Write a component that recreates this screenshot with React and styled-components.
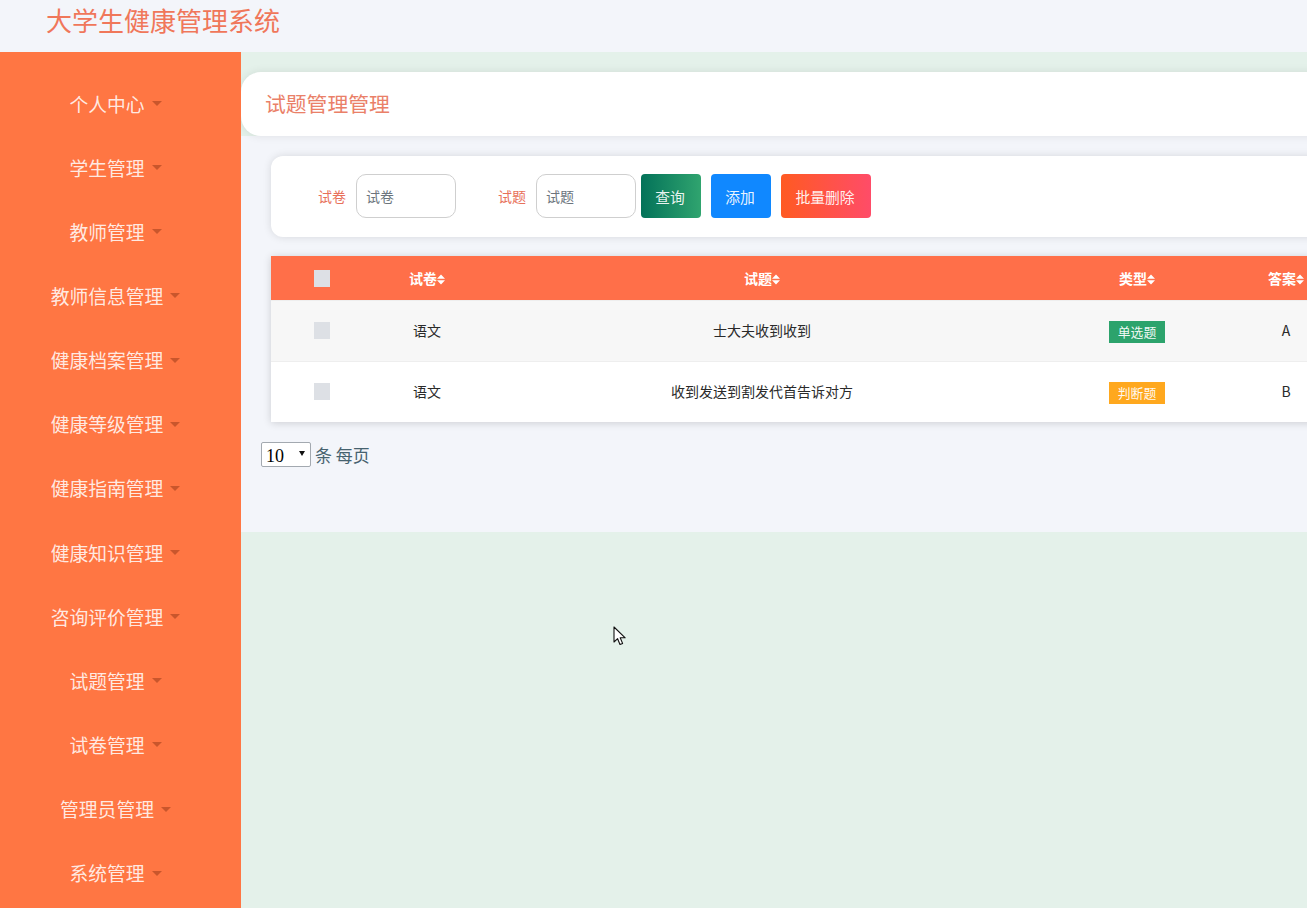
import React from "react";
import styled, { createGlobalStyle } from "styled-components";

const Global = createGlobalStyle`
  html, body { margin: 0; padding: 0; height: 100%; overflow: hidden; }
  body { font-family: "Noto Sans CJK SC", "Liberation Sans", sans-serif; background: #e4f1ea; }
  * { box-sizing: border-box; }
`;

const Page = styled.div`
  position: relative;
  width: 1307px;
  height: 908px;
  overflow: hidden;
  display: flex;
  flex-direction: column;
  background: #e4f1ea;
`;
const Header = styled.header`
  height: 52px;
  flex: none;
  background: #f3f5fa;
  padding-left: 46px;
`;
const Title = styled.h1`
  margin: 0;
  font-size: 26px;
  font-weight: 400;
  line-height: 40px;
  color: #f0775a;
`;
const Body = styled.div`
  flex: 1;
  min-height: 0;
  display: flex;
`;
const Sidebar = styled.nav`
  width: 241px;
  flex: none;
  background: #ff7643;
  padding: 20px 10px 0 0;
  overflow: hidden;
`;
const MenuItem = styled.div`
  height: 64.15px;
  display: flex;
  align-items: center;
  justify-content: center;
  gap: 7px;
  font-size: 18.8px;
  color: rgba(255, 255, 255, 0.86);
`;
const MenuLabel = styled.span`
  margin-bottom: 2px;
`;
const Caret = styled.span`
  width: 0;
  height: 0;
  margin-top: -1px;
  border-left: 5px solid transparent;
  border-right: 5px solid transparent;
  border-top: 5px solid #c9562c;
`;
const Main = styled.main`
  flex: 1;
  min-width: 0;
  padding-top: 20px;
  overflow: hidden;
`;
const Crumb = styled.div`
  position: relative;
  z-index: 1;
  width: 1200px;
  height: 64px;
  background: #fff;
  border-radius: 20px;
  padding: 0 0 2px 24px;
  display: flex;
  align-items: center;
  font-size: 20.8px;
  color: #ea8068;
  box-shadow: 0 0 10px rgba(0, 0, 0, 0.09);
`;
const Panel = styled.section`
  height: 396px;
  background: #f3f5fa;
  padding: 20px 0 0 20px;
`;
const SearchCard = styled.div`
  position: relative;
  z-index: 1;
  margin-left: 10px;
  width: 1200px;
  height: 81px;
  background: #fff;
  border-radius: 12px;
  padding: 18px 0 0 47px;
  display: flex;
  align-items: flex-start;
  box-shadow: 0 0 8px rgba(0, 0, 0, 0.12);
`;
const Label = styled.label`
  font-size: 14px;
  line-height: 44px;
  color: #e8705a;
  margin-right: 10px;
`;
const Input = styled.input`
  width: 100px;
  height: 44px;
  margin-right: ${(p) => p.$gap}px;
  padding: 0 9px;
  border: 1px solid #cfcfcf;
  border-radius: 10px;
  background: #fff;
  font: 14px "Noto Sans CJK SC", sans-serif;
  outline: none;
  &::placeholder { color: #6c757d; opacity: 1; }
`;
const Button = styled.button`
  width: ${(p) => p.$w}px;
  height: 44px;
  margin-right: 10px;
  border: 0;
  padding: 0 2px 0 0;
  border-radius: 4px;
  background: ${(p) => p.$bg};
  color: rgba(255, 255, 255, 0.92);
  font: 14.8px "Noto Sans CJK SC", sans-serif;
`;
const TableCard = styled.div`
  margin: 19px 0 0 10px;
  width: 1200px;
  box-shadow: 0 1px 8px rgba(0, 0, 0, 0.16);
`;
const Table = styled.table`
  width: 100%;
  table-layout: fixed;
  border-collapse: collapse;
  background: #fff;
  text-align: center;
`;
const HeadRow = styled.tr`
  height: 44px;
  background: #ff6f49;
  color: #fff;
  font-size: 14px;
`;
const Th = styled.th`
  padding: 0;
  font-weight: 700;
`;
const Sort = styled.svg`
  width: 8px;
  height: 11px;
  vertical-align: -1px;
`;
const Row = styled.tr`
  height: 61px;
  font-size: 14px;
  color: #2a2a2a;
  background: ${(p) => (p.$striped ? "#f7f7f7" : "#fff")};
  border-top: 1px solid #eee;
`;
const Td = styled.td`
  padding: 0 0 2px;
`;
const CheckCell = styled.td`
  padding: 0;
`;
const BadgeCell = styled.td`
  padding: 3px 0 0;
`;
const Check = styled.span`
  display: inline-block;
  width: 16px;
  height: 17px;
  margin-bottom: ${(p) => p.$up}px;
  vertical-align: middle;
  background: #dde0e5;
`;
const Badge = styled.span`
  display: inline-block;
  width: 56px;
  height: 22px;
  line-height: 21px;
  font-size: 12.8px;
  color: rgba(255, 255, 255, 0.95);
  background: ${(p) => p.$bg};
`;
const Pager = styled.div`
  margin-top: 20px;
  display: flex;
  align-items: center;
  gap: 4px;
  font-size: 17px;
  color: #46626f;
`;
const SelectWrap = styled.div`
  position: relative;
  display: flex;
`;
const PageSelect = styled.select`
  appearance: none;
  width: 50px;
  height: 25px;
  padding: 2px 0 0 4px;
  border: 1px solid #a3a9b0;
  border-radius: 2px;
  background: #fff;
  color: #000;
  font: 18px "Liberation Serif", serif;
`;
const SelectArrow = styled.span`
  position: absolute;
  right: 6px;
  top: 9px;
  width: 0;
  height: 0;
  border-left: 3px solid transparent;
  border-right: 3px solid transparent;
  border-top: 5px solid #111;
`;
const Cursor = styled.svg`
  position: absolute;
  left: 613px;
  top: 626px;
  width: 13px;
  height: 20px;
`;

const menu = ["个人中心", "学生管理", "教师管理", "教师信息管理", "健康档案管理", "健康等级管理", "健康指南管理", "健康知识管理", "咨询评价管理", "试题管理", "试卷管理", "管理员管理", "系统管理"];
const rows = [
  { paper: "语文", q: "士大夫收到收到", type: "单选题", color: "#2ca36c", ans: "A" },
  { paper: "语文", q: "收到发送到割发代首告诉对方", type: "判断题", color: "#ffa81e", ans: "B" },
];

const SortIcon = () => (
  <Sort viewBox="0 0 8 11">
    <path d="M4 .5 8 4.8H0zM4 10.5 0 6.2h8z" fill="#fff" />
  </Sort>
);

export default function App() {
  return (
    <Page>
      <Global />
      <Header><Title>大学生健康管理系统</Title></Header>
      <Body>
        <Sidebar>
          {menu.map((m) => (
            <MenuItem key={m}><MenuLabel>{m}</MenuLabel><Caret /></MenuItem>
          ))}
        </Sidebar>
        <Main>
          <Crumb>试题管理管理</Crumb>
          <Panel>
            <SearchCard>
              <Label>试卷</Label>
              <Input placeholder="试卷" $gap={42} />
              <Label>试题</Label>
              <Input placeholder="试题" $gap={5} />
              <Button $w={60} $bg="linear-gradient(90deg,#037259,#30a46f)">查询</Button>
              <Button $w={60} $bg="#1088ff">添加</Button>
              <Button $w={90} $bg="linear-gradient(90deg,#ff5a22,#ff4c68)">批量删除</Button>
            </SearchCard>
            <TableCard>
              <Table>
                <colgroup>
                  <col width="102" /><col width="108" /><col width="562" /><col width="188" /><col width="110" /><col width="130" />
                </colgroup>
                <thead>
                  <HeadRow>
                    <Th><Check $up={2} /></Th>
                    <Th>试卷<SortIcon /></Th>
                    <Th>试题<SortIcon /></Th>
                    <Th>类型<SortIcon /></Th>
                    <Th>答案<SortIcon /></Th>
                    <Th />
                  </HeadRow>
                </thead>
                <tbody>
                  {rows.map((r, i) => (
                    <Row key={i} $striped={i === 0}>
                      <CheckCell><Check $up={3} /></CheckCell>
                      <Td>{r.paper}</Td>
                      <Td>{r.q}</Td>
                      <BadgeCell><Badge $bg={r.color}>{r.type}</Badge></BadgeCell>
                      <Td>{r.ans}</Td>
                      <Td />
                    </Row>
                  ))}
                </tbody>
              </Table>
            </TableCard>
            <Pager>
              <SelectWrap>
                <PageSelect defaultValue="10"><option>10</option><option>20</option></PageSelect>
                <SelectArrow />
              </SelectWrap>
              条 每页
            </Pager>
          </Panel>
        </Main>
      </Body>
      <Cursor viewBox="0 0 13 20">
        <path d="M1 1v15l3.6-3.3 2.4 5.8 2.6-1.1-2.4-5.6h5z" fill="#fff" stroke="#111" strokeWidth="1.1" strokeLinejoin="round" />
      </Cursor>
    </Page>
  );
}
